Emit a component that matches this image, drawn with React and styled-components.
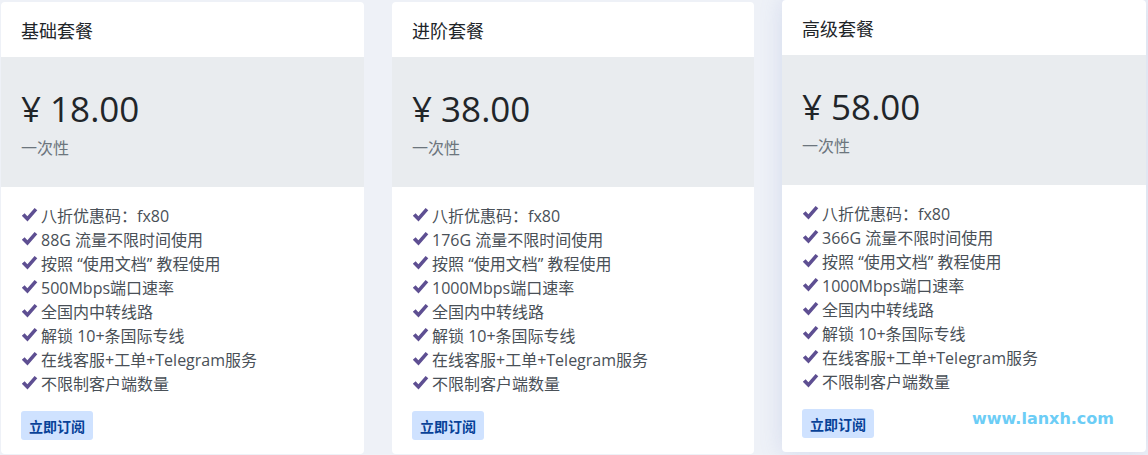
import React from "react";
import styled, { createGlobalStyle } from "styled-components";

const GlobalStyle = createGlobalStyle`
  body {
    margin: 0;
    background: #eef1f7;
    font-family: "Segoe UI", "Open Sans", "Noto Sans CJK SC", sans-serif;
  }
`;

const Page = styled.div`
  position: relative;
  display: grid;
  grid-template-columns: 363px 362px 364px;
  column-gap: 28px;
  align-items: start;
  padding-left: 1px;
  width: 1148px;
  height: 455px;
  box-sizing: border-box;
  overflow: hidden;
`;

const Card = styled.div`
  display: flex;
  flex-direction: column;
  margin-top: ${(p) => (p.$lifted ? "0" : "2px")};
  background: #fff;
  border-radius: 4px;
  overflow: hidden;
  box-shadow: ${(p) =>
    p.$lifted ? "0 0 22px rgba(120, 140, 210, 0.22)" : "none"};
`;

const Header = styled.div`
  height: 55px;
  display: flex;
  align-items: center;
  padding: 0 20px;
  font-size: 18px;
  color: #212529;
`;

const PriceBox = styled.div`
  height: 130px;
  box-sizing: border-box;
  background: #e9ecef;
  padding: 30px 20px 0;
  display: flex;
  flex-direction: column;
`;

const Price = styled.div`
  font-size: 35px;
  line-height: 44px;
  color: #212529;
`;

const Period = styled.div`
  margin-top: 4px;
  font-size: 16px;
  color: #6c757d;
`;

const Body = styled.div`
  padding: 16px 20px 14px;
  display: flex;
  flex-direction: column;
  align-items: flex-start;
`;

const List = styled.ul`
  list-style: none;
  margin: 0;
  padding: 0;
`;

const Item = styled.li`
  display: flex;
  align-items: center;
  gap: 3px;
  height: 24px;
  font-size: 16px;
  color: #495057;
  white-space: pre;
`;

const Button = styled.button`
  margin-top: 16px;
  height: 29px;
  padding: 0 8px;
  border: none;
  border-radius: 3px;
  background: #cfe2ff;
  color: #084298;
  font-family: inherit;
  font-size: 14px;
  font-weight: 700;
`;

const Watermark = styled.div`
  position: absolute;
  left: 972px;
  top: 409px;
  font-family: "Verdana", "DejaVu Sans", sans-serif;
  font-size: 16px;
  font-weight: 700;
  color: #6ccdf6;
`;

const Check = () => (
  <svg width="17" height="16" viewBox="0 0 17 16">
    <path
      d="M0.8 8.8 L3.6 6.2 L6.4 9.2 L13.6 0.9 L16.3 3.3 L6.5 14.6 Z"
      fill="#5e4f92"
    />
  </svg>
);

const plans = [
  { name: "基础套餐", price: "18.00", flow: "88G", speed: "500Mbps" },
  { name: "进阶套餐", price: "38.00", flow: "176G", speed: "1000Mbps" },
  { name: "高级套餐", price: "58.00", flow: "366G", speed: "1000Mbps", lifted: true },
];

export default function App() {
  return (
    <>
      <GlobalStyle />
      <Page>
        {plans.map((p) => {
          const features = [
            "八折优惠码：fx80",
            `${p.flow} 流量不限时间使用`,
            "按照 “使用文档” 教程使用",
            `${p.speed}端口速率`,
            "全国内中转线路",
            "解锁 10+条国际专线",
            "在线客服+工单+Telegram服务",
            "不限制客户端数量",
          ];
          return (
            <Card key={p.name} $lifted={p.lifted}>
              <Header>{p.name}</Header>
              <PriceBox>
                <Price>¥ {p.price}</Price>
                <Period>一次性</Period>
              </PriceBox>
              <Body>
                <List>
                  {features.map((f) => (
                    <Item key={f}>
                      <Check />
                      {f}
                    </Item>
                  ))}
                </List>
                <Button>立即订阅</Button>
              </Body>
            </Card>
          );
        })}
        <Watermark>www.lanxh.com</Watermark>
      </Page>
    </>
  );
}
